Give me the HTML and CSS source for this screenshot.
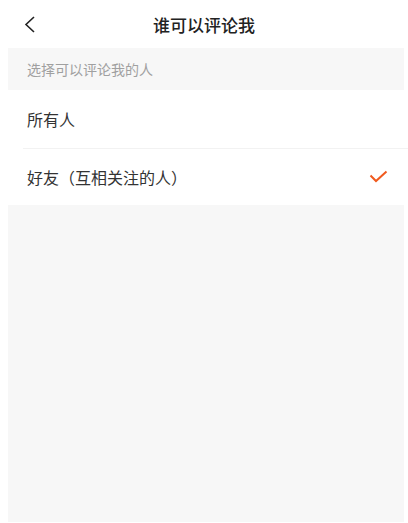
FILE: index.html
```html
<!DOCTYPE html>
<html lang="zh-CN">
<head>
    <meta charset="UTF-8">
    <meta name="viewport" content="width=device-width, initial-scale=1.0">
    <title>谁可以评论我</title>
    <link rel="stylesheet" href="styles.css">
</head>
<body>
    <div class="header">
        <svg class="back" width="12" height="17" viewBox="0 0 12 17">
            <path d="M10 1 L2 8.5 L10 16" fill="none" stroke="#222" stroke-width="1.6"/>
        </svg>
        <h1 class="title">谁可以评论我</h1>
    </div>
    <div class="page">
        <div class="section-title">选择可以评论我的人</div>
        <ul class="options">
            <li class="option">所有人</li>
            <li class="option selected">
                好友（互相关注的人）
                <svg class="check" width="19" height="13" viewBox="0 0 19 13">
                    <path d="M1.5 5.5 L7 11 L17.5 1.5" fill="none" stroke="#f05a1e" stroke-width="2"/>
                </svg>
            </li>
        </ul>
        <div class="empty"></div>
    </div>
</body>
</html>
```

FILE: styles.css
```css
* {
    box-sizing: border-box;
}
html, body {
    height: 100%;
}
body {
    margin: 0;
    background: white;
    font-family: "Noto Sans CJK SC", "Noto Sans", sans-serif;
    color: #333;
    display: flex;
    flex-direction: column;
}
.header {
    height: 48px;
    display: flex;
    align-items: center;
    justify-content: center;
    position: relative;
}
.back {
    position: absolute;
    left: 24px;
    top: 16px;
}
.title {
    margin: 0;
    font-size: 17px;
    font-weight: 500;
    color: #222;
    line-height: 1;
}
.page {
    flex: 1;
    margin: 0 4px 1px 8px;
    display: flex;
    flex-direction: column;
}
.section-title {
    height: 42px;
    background: #f7f7f7;
    color: #a0a0a0;
    font-size: 14px;
    padding-left: 19px;
    display: flex;
    align-items: center;
}
.options {
    list-style: none;
    margin: 0 -4px 0 -8px;
    padding: 0;
    background: white;
}
.option {
    height: 57px;
    padding-left: 27px;
    padding-right: 20px;
    font-size: 16px;
    display: flex;
    align-items: center;
    justify-content: space-between;
    position: relative;
}
.option:first-child {
    height: 58px;
}
.option + .option::before {
    content: "";
    position: absolute;
    top: 0;
    left: 23px;
    right: 0;
    border-top: 1px solid #f2f2f2;
}
.empty {
    flex: 1;
    background: #f7f7f7;
}
```
